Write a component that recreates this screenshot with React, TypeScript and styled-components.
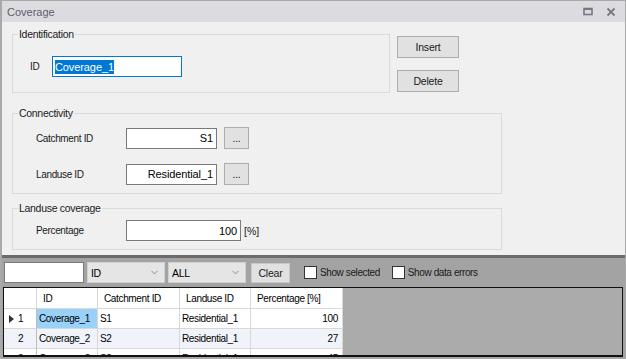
import styled, { createGlobalStyle } from "styled-components"
import { ChevronDown } from "lucide-react"

const GlobalStyle = createGlobalStyle`
  html, body {
    margin: 0;
    padding: 0;
    background: #f0f0f0;
    font-family: "Liberation Sans", Arial, sans-serif;
  }
`

const Window = styled.div`
  width: 626px;
  height: 359px;
  box-sizing: border-box;
  border: 1px solid #a9a9a9;
  border-left: 2px solid #a9a9a9;
  background: #f0f0f0;
  display: flex;
  flex-direction: column;
  overflow: hidden;
`

const TitleBar = styled.div`
  height: 21px;
  flex-shrink: 0;
  background: #dcdce0;
  display: flex;
  align-items: center;
  padding: 0 9px 0 5px;
  color: #5c5c6c;
  font-size: 11px;
`

const TitleText = styled.span`
  flex: 1;
`

const TitleIcons = styled.div`
  display: flex;
  align-items: center;
  gap: 13px;
  color: #787884;
`

const Form = styled.div`
  flex: 1;
  display: flex;
  flex-direction: column;
  padding: 6px 0 0 10px;
`

const TopRow = styled.div`
  display: flex;
  gap: 7px;
  margin-bottom: 14px;
`

const Group = styled.fieldset<{ $w: number; $pt: number; $pb: number; $gap?: number }>`
  margin: 0;
  box-sizing: border-box;
  width: ${({ $w }) => $w}px;
  border: 1px solid #dadada;
  border-radius: 0;
  padding: ${({ $pt, $pb }) => `${$pt}px 0 ${$pb}px 0`};
  display: flex;
  flex-direction: column;
  gap: ${({ $gap }) => $gap ?? 0}px;
`

const Legend = styled.legend`
  margin-left: 5px;
  padding: 0 1px;
  font-size: 10.5px;
  line-height: 12px;
  color: #1a1a1a;
  letter-spacing: -0.3px;
`

const FieldRow = styled.div<{ $pl: number }>`
  display: flex;
  align-items: center;
  padding-left: ${({ $pl }) => $pl}px;
`

const Label = styled.span<{ $w: number }>`
  width: ${({ $w }) => $w}px;
  font-size: 10px;
  letter-spacing: -0.35px;
  color: #1a1a1a;
`

const TextBox = styled.div<{ $w: number; $focus?: boolean; $align?: string }>`
  box-sizing: border-box;
  width: ${({ $w }) => $w}px;
  height: 21px;
  background: #fff;
  border: 1px solid ${({ $focus }) => ($focus ? "#0078d7" : "#7a7a7a")};
  display: flex;
  align-items: center;
  justify-content: ${({ $align }) => ($align === "right" ? "flex-end" : "flex-start")};
  padding: 0 3px 0 2px;
  font-size: 11px;
  letter-spacing: -0.1px;
  color: #000;
`

const Selected = styled.span`
  background: #0078d7;
  color: #fff;
  padding: 1px 0;
`

const ButtonCol = styled.div`
  display: flex;
  flex-direction: column;
  gap: 12px;
  padding-top: 8px;
`

const WinButton = styled.div<{ $w: number; $ml?: number }>`
  box-sizing: border-box;
  width: ${({ $w }) => $w}px;
  height: 22px;
  margin-left: ${({ $ml }) => $ml ?? 0}px;
  background: #e1e1e1;
  border: 1px solid #adadad;
  display: flex;
  align-items: center;
  justify-content: center;
  font-size: 10.5px;
  letter-spacing: -0.2px;
  color: #1a1a1a;
`

const Unit = styled.span`
  margin-left: 3px;
  font-size: 10.5px;
  color: #1a1a1a;
`

const BottomPanel = styled.div`
  flex-shrink: 0;
  height: 103px;
  box-sizing: border-box;
  border-top: 3px solid #6b6b6b;
  background: #a3a3a3;
  display: flex;
  flex-direction: column;
`

const Toolbar = styled.div`
  height: 29px;
  flex-shrink: 0;
  display: flex;
  align-items: center;
  padding: 0 3px 0 2px;
  gap: 3px;
`

const SearchBox = styled.div`
  box-sizing: border-box;
  width: 80px;
  height: 21px;
  background: #fff;
  border: 1px solid #7a7a7a;
`

const Combo = styled.div`
  box-sizing: border-box;
  width: 78px;
  height: 21px;
  background: #e5e5e5;
  border: 1px solid #d0d0d0;
  display: flex;
  align-items: center;
  justify-content: space-between;
  padding: 0 4px 0 3px;
  font-size: 10.5px;
  letter-spacing: -0.3px;
  color: #000;
`

const ClearButton = styled(WinButton)`
  height: 20px;
  border-color: #c8c8c8;
  background: #e1e1e1;
`

const Check = styled.label<{ $ml: number }>`
  display: flex;
  align-items: center;
  gap: 3px;
  margin-left: ${({ $ml }) => $ml}px;
  font-size: 10px;
  letter-spacing: -0.4px;
  color: #1a1a1a;
`

const Box = styled.span`
  box-sizing: border-box;
  width: 13px;
  height: 13px;
  background: #fff;
  border: 1px solid #333;
`

const GridWrap = styled.div`
  flex: 1;
  margin: 0 2px 1px 1px;
  border: 1px solid #111;
  border-bottom-width: 2px;
  background: #ababab;
  overflow: hidden;
`

const Table = styled.div`
  display: grid;
  grid-template-columns: 33px 61px 82px 71px 92px;
  grid-template-rows: 21px;
  grid-auto-rows: 20px;
  width: fit-content;
`

const Cell = styled.div<{ $bg?: string; $right?: boolean; $head?: boolean }>`
  box-sizing: border-box;
  background: ${({ $bg }) => $bg || "#fff"};
  border-right: 1px solid #d8d8d8;
  border-bottom: 1px solid #d8d8d8;
  display: flex;
  align-items: center;
  justify-content: ${({ $right }) => ($right ? "flex-end" : "flex-start")};
  padding: 0 ${({ $right }) => ($right ? "4px" : "2px")} 0 ${({ $head }) => ($head ? "6px" : "2px")};
  font-size: 10px;
  letter-spacing: -0.35px;
  color: #000;
  white-space: nowrap;
  overflow: hidden;
`

const RowHead = styled(Cell)`
  padding-left: 5px;
  gap: 4px;
  border-right-color: #bdbdbd;
`

const Arrow = styled.span<{ $show: boolean }>`
  width: 0;
  height: 0;
  border-top: 4px solid transparent;
  border-bottom: 4px solid transparent;
  border-left: 5px solid ${({ $show }) => ($show ? "#333" : "transparent")};
`

const rows = [
  { n: "1", id: "Coverage_1", c: "S1", l: "Residential_1", p: "100" },
  { n: "2", id: "Coverage_2", c: "S2", l: "Residential_1", p: "27" },
  { n: "3", id: "Coverage_3", c: "S3", l: "Residential_1", p: "45" },
]

export default function App() {
  return (
    <>
      <GlobalStyle />
      <Window>
        <TitleBar>
          <TitleText>Coverage</TitleText>
          <TitleIcons>
            <svg width="10" height="9" viewBox="0 0 10 9">
              <rect x="1" y="1.5" width="8" height="6" fill="none" stroke="currentColor" strokeWidth="1.6" />
              <rect x="1" y="1" width="8" height="2" fill="currentColor" />
            </svg>
            <svg width="10" height="10" viewBox="0 0 10 10">
              <path d="M1.5 1.5 L8.5 8.5 M8.5 1.5 L1.5 8.5" stroke="currentColor" strokeWidth="1.8" />
            </svg>
          </TitleIcons>
        </TitleBar>

        <Form>
          <TopRow>
            <Group $w={378} $pt={16} $pb={15}>
              <Legend>Identification</Legend>
              <FieldRow $pl={17}>
                <Label $w={22}>ID</Label>
                <TextBox $w={130} $focus>
                  <Selected>Coverage_1</Selected>
                </TextBox>
              </FieldRow>
            </Group>
            <ButtonCol>
              <WinButton $w={62}>Insert</WinButton>
              <WinButton $w={62}>Delete</WinButton>
            </ButtonCol>
          </TopRow>

          <Group $w={490} $pt={8} $pb={8} $gap={14}>
            <Legend>Connectivity</Legend>
            <FieldRow $pl={23}>
              <Label $w={90}>Catchment ID</Label>
              <TextBox $w={91} $align="right">S1</TextBox>
              <WinButton $w={25} $ml={7}>...</WinButton>
            </FieldRow>
            <FieldRow $pl={23}>
              <Label $w={90}>Landuse ID</Label>
              <TextBox $w={91} $align="right">Residential_1</TextBox>
              <WinButton $w={25} $ml={7}>...</WinButton>
            </FieldRow>
          </Group>

          <Group $w={490} $pt={6} $pb={8} style={{ marginTop: 8 }}>
            <Legend>Landuse coverage</Legend>
            <FieldRow $pl={23}>
              <Label $w={90}>Percentage</Label>
              <TextBox $w={115} $align="right">100</TextBox>
              <Unit>[%]</Unit>
            </FieldRow>
          </Group>
        </Form>

        <BottomPanel>
          <Toolbar>
            <SearchBox />
            <Combo>
              ID
              <ChevronDown size={11} strokeWidth={1.3} color="#555" />
            </Combo>
            <Combo>
              ALL
              <ChevronDown size={11} strokeWidth={1.3} color="#555" />
            </Combo>
            <ClearButton $w={39} $ml={2}>Clear</ClearButton>
            <Check $ml={11}>
              <Box />
              Show selected
            </Check>
            <Check $ml={9}>
              <Box />
              Show data errors
            </Check>
          </Toolbar>
          <GridWrap>
            <Table>
              <Cell $head />
              <Cell $head>ID</Cell>
              <Cell $head>Catchment ID</Cell>
              <Cell $head>Landuse ID</Cell>
              <Cell $head>Percentage [%]</Cell>
              {rows.map((r, i) => {
                const bg = i % 2 === 1 ? "#f0f4fa" : "#fff"
                return [
                  <RowHead key={r.n + "h"} $bg={bg}>
                    <Arrow $show={i === 0} />
                    {r.n}
                  </RowHead>,
                  <Cell key={r.n + "a"} $bg={i === 0 ? "#99d1f9" : bg}>{r.id}</Cell>,
                  <Cell key={r.n + "b"} $bg={bg}>{r.c}</Cell>,
                  <Cell key={r.n + "c"} $bg={bg}>{r.l}</Cell>,
                  <Cell key={r.n + "d"} $bg={bg} $right>{r.p}</Cell>,
                ]
              })}
            </Table>
          </GridWrap>
        </BottomPanel>
      </Window>
    </>
  )
}
